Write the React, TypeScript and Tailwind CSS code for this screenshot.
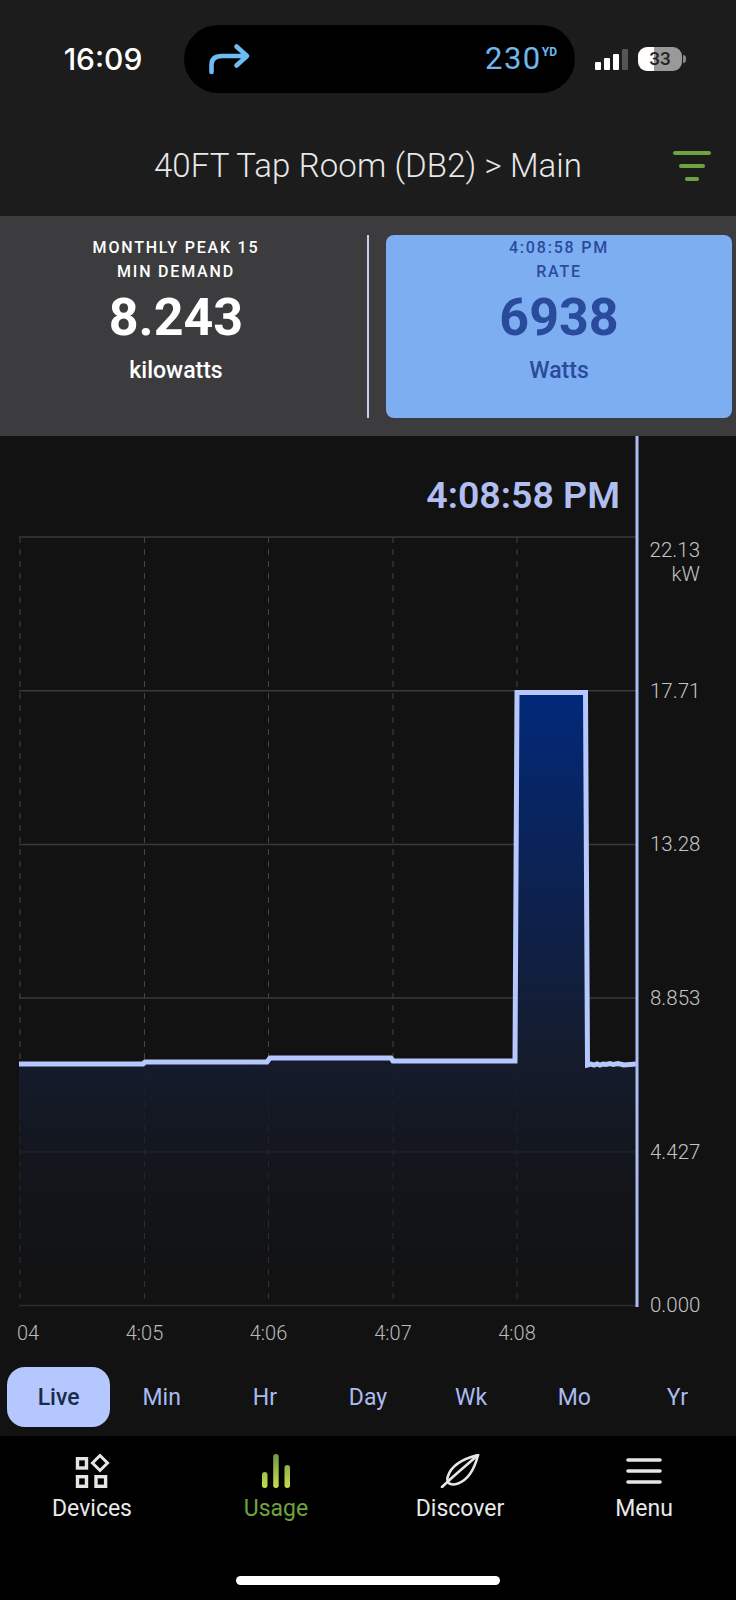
import React from 'react';

const GRID_Y = [537, 690.7, 844.4, 998, 1152, 1305.5];
const GRID_X = [20, 144.5, 268.5, 393, 517];
const Y_LABELS = [
  { y: 691, text: '17.71' },
  { y: 844, text: '13.28' },
  { y: 998, text: '8.853' },
  { y: 1152, text: '4.427' },
  { y: 1305, text: '0.000' },
];
const X_LABELS = [
  { x: 144.5, text: '4:05' },
  { x: 268.5, text: '4:06' },
  { x: 393, text: '4:07' },
  { x: 517, text: '4:08' },
];
const TABS = ['Live', 'Min', 'Hr', 'Day', 'Wk', 'Mo', 'Yr'];

const LINE =
  'M19 1064 L143 1064 L145 1062 L267 1062 L270 1058 L391 1058 L393 1061 L515 1061 L517 692.5 L585.5 692.5 L587.5 1065 L591 1064 L594 1065 L597 1064 L600 1065 L603 1064 L606 1064.5 L610 1063.5 L613 1064.5 L618 1063.5 L624 1065 L636 1064';

function DevicesIcon() {
  return (
    <svg width="40" height="34" viewBox="0 0 40 34" fill="none" stroke="#e6e6e6" strokeWidth="3.4">
      <rect x="5.5" y="4.7" width="9" height="9.3" />
      <rect x="5.5" y="22.7" width="9" height="9.6" />
      <rect x="24" y="22.7" width="9.6" height="9.6" />
      <path d="M28 1.5 L35.5 9 L28 16.5 L20.5 9 Z" strokeWidth="3" />
    </svg>
  );
}

function UsageIcon() {
  return (
    <svg width="34" height="34" viewBox="0 0 34 34">
      <defs>
        <linearGradient id="usageBar" gradientUnits="userSpaceOnUse" x1="0" y1="0" x2="0" y2="34">
          <stop offset="0" stopColor="#6f9a45" />
          <stop offset="1" stopColor="#c6de50" />
        </linearGradient>
      </defs>
      <rect x="3" y="18" width="5.5" height="16" rx="2.7" fill="url(#usageBar)" />
      <rect x="14.2" y="0" width="5.5" height="34" rx="2.7" fill="url(#usageBar)" />
      <rect x="25.5" y="11" width="5.5" height="23" rx="2.7" fill="url(#usageBar)" />
    </svg>
  );
}

function LeafIcon() {
  return (
    <svg width="40" height="34" viewBox="0 0 40 34" fill="none" stroke="#e6e6e6" strokeWidth="2.6" strokeLinejoin="round" strokeLinecap="round">
      <path d="M38 1 C26 4 12 10 8 22 C7 25 7 27 8.5 29 C11 31 15 30.5 18 29.5 C30 25 35 13 38 1 Z" />
      <path d="M38 1 C28 10 14 21 2 33" />
    </svg>
  );
}

function MenuIcon() {
  return (
    <svg width="36" height="34" viewBox="0 0 36 34" fill="none" stroke="#e6e6e6" strokeWidth="3.6" strokeLinecap="round">
      <path d="M2 6 H34 M2 17 H34 M2 28 H34" />
    </svg>
  );
}

function Chart() {
  return (
    <svg className="block font-['Roboto',sans-serif]" width="736" height="931" viewBox="0 436 736 931">
      <defs>
        <linearGradient id="usageFill" gradientUnits="userSpaceOnUse" x1="0" y1="692" x2="0" y2="1306">
          <stop offset="0" stopColor="#02297a" />
          <stop offset="0.6" stopColor="#151c2e" stopOpacity="0.95" />
          <stop offset="1" stopColor="#121212" stopOpacity="0.3" />
        </linearGradient>
      </defs>
      {GRID_X.map((x) => (
        <line key={x} x1={x} x2={x} y1="537" y2="1306" stroke="#444" strokeWidth="1" strokeDasharray="6 6" />
      ))}
      {GRID_Y.map((y) => (
        <line key={y} x1="19" x2="636" y1={y} y2={y} stroke="#3a3a3a" strokeWidth="1.5" />
      ))}
      <path d={`${LINE} L636 1306 L19 1306 Z`} fill="url(#usageFill)" />
      <path d={LINE} fill="none" stroke="#b7c8ff" strokeWidth="5" />
      <line x1="637" x2="637" y1="436" y2="1307" stroke="#a9bcf5" strokeWidth="3" />
      <text x="700" y="557" textAnchor="end" fontSize="20.5" fontWeight="300" fill="#c4c4c4">22.13</text>
      <text x="700" y="581" textAnchor="end" fontSize="20.5" fontWeight="300" fill="#c4c4c4">kW</text>
      {Y_LABELS.map((l) => (
        <text key={l.text} x="650" y={l.y + 7} fontSize="20.5" fontWeight="300" fill="#c4c4c4">{l.text}</text>
      ))}
      <text x="17" y="1340" fontSize="20" fontWeight="300" fill="#bbbbbb">04</text>
      {X_LABELS.map((l) => (
        <text key={l.text} x={l.x} y="1340" textAnchor="middle" fontSize="20" fontWeight="300" fill="#bbbbbb">{l.text}</text>
      ))}
    </svg>
  );
}

export default function App() {
  return (
    <div className="flex h-[1600px] w-[736px] flex-col overflow-hidden bg-black font-['Roboto',sans-serif]">
      {/* status bar + title */}
      <div className="h-[216px] shrink-0 bg-[#1c1c1c]">
        <div className="flex h-[118px] items-start pt-[25px]">
          <div className="flex h-[68px] w-[184px] items-center justify-center pl-[22px] font-['Inter',sans-serif] text-[30px] font-medium text-white">16:09</div>
          <div className="flex h-[68px] w-[391px] items-center justify-between rounded-full bg-black pl-[24px] pr-[18px]">
            <svg width="44" height="36" viewBox="0 0 44 36" fill="none" stroke="#6fbcf5" strokeWidth="4.6" strokeLinecap="round" strokeLinejoin="round">
              <path d="M3.5 31 V24 C3.5 18 7 15 14 15 H37" />
              <path d="M28.5 5.5 L39 15 L28.5 24.5" />
            </svg>
            <div className="flex items-start text-[#6fb8ee]">
              <span className="text-[31px] leading-[32px] tracking-[1.5px]">230</span>
              <span className="text-[12px] font-bold leading-[18px]">YD</span>
            </div>
          </div>
          <div className="flex h-[68px] items-center pl-[20px]">
            <div className="flex items-end gap-[3px]">
              <div className="h-[8px] w-[6px] rounded-[1px] bg-white" />
              <div className="h-[12px] w-[6px] rounded-[1px] bg-white" />
              <div className="h-[16px] w-[6px] rounded-[1px] bg-white" />
              <div className="h-[21px] w-[6px] rounded-[1px] bg-[#555]" />
            </div>
            <div className="ml-[10px] flex h-[24px] w-[44px] items-center justify-center rounded-[9px] bg-[linear-gradient(90deg,#ffffff_0,#ffffff_36%,#999999_36%,#999999_100%)] text-[19px] font-medium text-[#222]">33</div>
            <div className="ml-[1px] h-[8px] w-[3px] rounded-r-full bg-[#888]" />
          </div>
        </div>
        <div className="relative flex h-[98px] items-start justify-center pt-[29px]">
          <div className="text-[33px] font-light leading-[38px] tracking-[0.1px] text-[#e8e8e8]">40FT Tap Room (DB2) &gt; Main</div>
          <div className="absolute left-[673px] top-[33px] flex w-[38px] flex-col items-center gap-[9px]">
            <div className="h-[4px] w-[38px] rounded-full bg-[#6ea33f]" />
            <div className="h-[4px] w-[26px] rounded-full bg-[#6ea33f]" />
            <div className="h-[4px] w-[14px] rounded-full bg-[#6ea33f]" />
          </div>
        </div>
      </div>

      {/* stats */}
      <div className="flex h-[220px] shrink-0 items-start bg-[#3c3c3e] pt-[19px] pr-[4px]">
        <div className="flex h-[183px] w-[352px] flex-col items-center pt-[1px] text-white">
          <div className="text-center text-[16px] font-medium leading-[24px] tracking-[1.8px]">MONTHLY PEAK 15<br />MIN DEMAND</div>
          <div className="mt-[4px] text-[52px] font-bold leading-[60px]">8.243</div>
          <div className="mt-[9px] text-[23px] font-medium leading-[28px]">kilowatts</div>
        </div>
        <div className="ml-[15px] mr-[17px] h-[183px] w-[2px] bg-[#c3d0f0]" />
        <div className="flex h-[183px] flex-1 flex-col items-center rounded-[8px] bg-[#7eaef2] pt-[1px] text-[#2a4a9c]">
          <div className="text-center text-[16px] font-medium leading-[24px] tracking-[1.8px]">4:08:58 PM<br />RATE</div>
          <div className="mt-[4px] text-[52px] font-bold leading-[60px]">6938</div>
          <div className="mt-[9px] text-[23px] font-medium leading-[28px]">Watts</div>
        </div>
      </div>

      {/* chart + range tabs */}
      <div className="relative h-[1000px] shrink-0 bg-[#121212]">
        <Chart />
        <div className="absolute right-[116px] top-[37px] text-[37.5px] font-semibold leading-[44px] text-[#b0bff0]">4:08:58 PM</div>
        <div className="grid h-[60px] grid-cols-7 px-[7px]">
          {TABS.map((t, i) => (
            <div
              key={t}
              className={
                i === 0
                  ? 'flex items-center justify-center rounded-[18px] bg-[#b5c7ff] pt-[2px] text-[23px] font-medium text-[#1b2a4a]'
                  : 'flex items-center justify-center pt-[3px] text-[23px] text-[#a9bbf0]'
              }
            >
              {t}
            </div>
          ))}
        </div>
      </div>

      {/* bottom nav */}
      <div className="relative flex-1 bg-black">
        <div className="grid grid-cols-4 pt-[18px]">
          <div className="flex flex-col items-center text-[23px] text-[#e8e8e8]">
            <DevicesIcon />
            <span className="mt-[7px] leading-[28px]">Devices</span>
          </div>
          <div className="flex flex-col items-center text-[23px] text-[#6ea33f]">
            <UsageIcon />
            <span className="mt-[7px] leading-[28px]">Usage</span>
          </div>
          <div className="flex flex-col items-center text-[23px] text-[#e8e8e8]">
            <LeafIcon />
            <span className="mt-[7px] leading-[28px]">Discover</span>
          </div>
          <div className="flex flex-col items-center text-[23px] text-[#e8e8e8]">
            <MenuIcon />
            <span className="mt-[7px] leading-[28px]">Menu</span>
          </div>
        </div>
        <div className="absolute bottom-[15px] left-[236px] h-[9px] w-[264px] rounded-full bg-white" />
      </div>
    </div>
  );
}
